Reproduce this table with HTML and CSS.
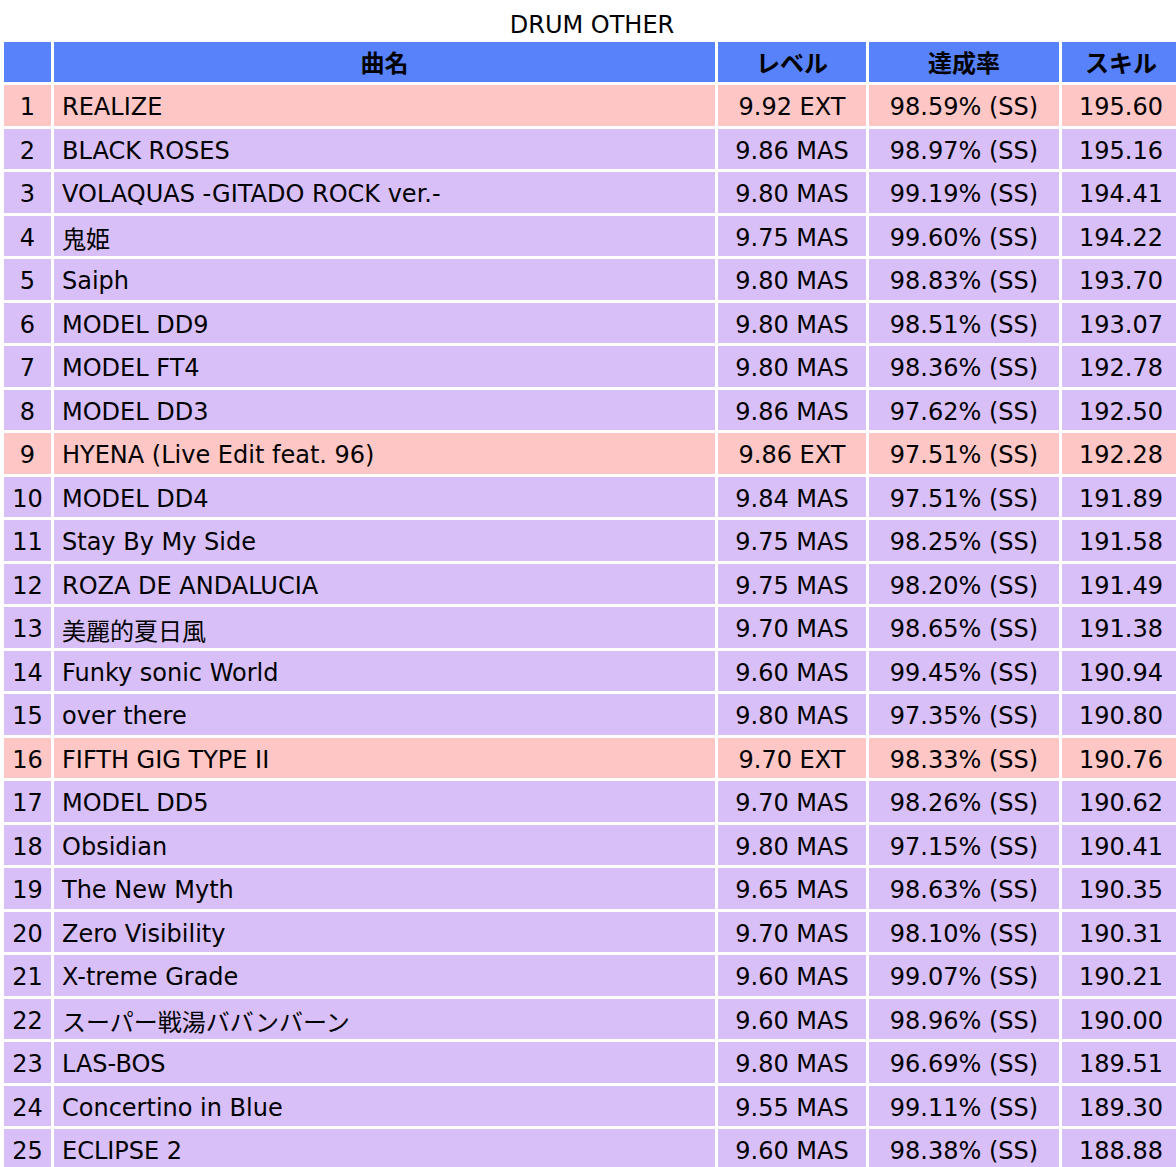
FILE: index.html
```html
<!DOCTYPE html>
<html lang="ja">
<head>
<meta charset="utf-8">
<title>DRUM OTHER</title>
<link rel="stylesheet" href="styles.css">
</head>
<body>
<div class="wrap">
<table class="skill">
<caption>DRUM OTHER</caption>
<colgroup>
<col class="c-no"><col class="c-title"><col class="c-lv"><col class="c-rate"><col class="c-skill">
</colgroup>
<thead>
<tr><th></th><th>曲名</th><th>レベル</th><th>達成率</th><th>スキル</th></tr>
</thead>
<tbody>
<tr class="ext"><td class="no">1</td><td class="title">REALIZE</td><td>9.92 EXT</td><td>98.59% (SS)</td><td>195.60</td></tr>
<tr class="mas"><td class="no">2</td><td class="title">BLACK ROSES</td><td>9.86 MAS</td><td>98.97% (SS)</td><td>195.16</td></tr>
<tr class="mas"><td class="no">3</td><td class="title">VOLAQUAS -GITADO ROCK ver.-</td><td>9.80 MAS</td><td>99.19% (SS)</td><td>194.41</td></tr>
<tr class="mas"><td class="no">4</td><td class="title">鬼姫</td><td>9.75 MAS</td><td>99.60% (SS)</td><td>194.22</td></tr>
<tr class="mas"><td class="no">5</td><td class="title">Saiph</td><td>9.80 MAS</td><td>98.83% (SS)</td><td>193.70</td></tr>
<tr class="mas"><td class="no">6</td><td class="title">MODEL DD9</td><td>9.80 MAS</td><td>98.51% (SS)</td><td>193.07</td></tr>
<tr class="mas"><td class="no">7</td><td class="title">MODEL FT4</td><td>9.80 MAS</td><td>98.36% (SS)</td><td>192.78</td></tr>
<tr class="mas"><td class="no">8</td><td class="title">MODEL DD3</td><td>9.86 MAS</td><td>97.62% (SS)</td><td>192.50</td></tr>
<tr class="ext"><td class="no">9</td><td class="title">HYENA (Live Edit feat. 96)</td><td>9.86 EXT</td><td>97.51% (SS)</td><td>192.28</td></tr>
<tr class="mas"><td class="no">10</td><td class="title">MODEL DD4</td><td>9.84 MAS</td><td>97.51% (SS)</td><td>191.89</td></tr>
<tr class="mas"><td class="no">11</td><td class="title">Stay By My Side</td><td>9.75 MAS</td><td>98.25% (SS)</td><td>191.58</td></tr>
<tr class="mas"><td class="no">12</td><td class="title">ROZA DE ANDALUCIA</td><td>9.75 MAS</td><td>98.20% (SS)</td><td>191.49</td></tr>
<tr class="mas"><td class="no">13</td><td class="title">美麗的夏日風</td><td>9.70 MAS</td><td>98.65% (SS)</td><td>191.38</td></tr>
<tr class="mas"><td class="no">14</td><td class="title">Funky sonic World</td><td>9.60 MAS</td><td>99.45% (SS)</td><td>190.94</td></tr>
<tr class="mas"><td class="no">15</td><td class="title">over there</td><td>9.80 MAS</td><td>97.35% (SS)</td><td>190.80</td></tr>
<tr class="ext"><td class="no">16</td><td class="title">FIFTH GIG TYPE II</td><td>9.70 EXT</td><td>98.33% (SS)</td><td>190.76</td></tr>
<tr class="mas"><td class="no">17</td><td class="title">MODEL DD5</td><td>9.70 MAS</td><td>98.26% (SS)</td><td>190.62</td></tr>
<tr class="mas"><td class="no">18</td><td class="title">Obsidian</td><td>9.80 MAS</td><td>97.15% (SS)</td><td>190.41</td></tr>
<tr class="mas"><td class="no">19</td><td class="title">The New Myth</td><td>9.65 MAS</td><td>98.63% (SS)</td><td>190.35</td></tr>
<tr class="mas"><td class="no">20</td><td class="title">Zero Visibility</td><td>9.70 MAS</td><td>98.10% (SS)</td><td>190.31</td></tr>
<tr class="mas"><td class="no">21</td><td class="title">X-treme Grade</td><td>9.60 MAS</td><td>99.07% (SS)</td><td>190.21</td></tr>
<tr class="mas"><td class="no">22</td><td class="title">スーパー戦湯ババンバーン</td><td>9.60 MAS</td><td>98.96% (SS)</td><td>190.00</td></tr>
<tr class="mas"><td class="no">23</td><td class="title">LAS-BOS</td><td>9.80 MAS</td><td>96.69% (SS)</td><td>189.51</td></tr>
<tr class="mas"><td class="no">24</td><td class="title">Concertino in Blue</td><td>9.55 MAS</td><td>99.11% (SS)</td><td>189.30</td></tr>
<tr class="mas"><td class="no">25</td><td class="title">ECLIPSE 2</td><td>9.60 MAS</td><td>98.38% (SS)</td><td>188.88</td></tr>
</tbody>
</table>
</div>
</body>
</html>
```
FILE: styles.css
```css
html, body {
  margin: 0;
  padding: 0;
  background: #ffffff;
  overflow: hidden;
}

.wrap {
  padding: 11px 0 0 1px;
}

.skill {
  font-family: "DejaVu Sans", "Noto Sans CJK JP", sans-serif;
  font-size: 24px;
  color: #000000;
  border-collapse: separate;
  border-spacing: 3px;
  table-layout: fixed;
  width: 1182px;
}

.skill caption {
  line-height: 28px;
  padding-top: 1px;
  margin-top: -1px;
  text-align: center;
  caption-side: top;
}

.c-no { width: 47px; }
.c-title { width: 661px; }
.c-lv { width: 148px; }
.c-rate { width: 190px; }
.c-skill { width: 118px; }

.skill th {
  background: #5782fa;
  height: 40px;
  padding: 0 0 2px 0;
  box-sizing: border-box;
  font-weight: bold;
  text-align: center;
  vertical-align: middle;
}

.skill td {
  height: 40.5px;
  padding: 4px 0 0 0;
  box-sizing: border-box;
  text-align: center;
  vertical-align: middle;
  white-space: nowrap;
  overflow: hidden;
}

.skill td.title {
  text-align: left;
  padding-left: 8px;
}

.skill tr.mas td {
  background: #d8bff7;
}

.skill tr.ext td {
  background: #ffc6c6;
}
```
